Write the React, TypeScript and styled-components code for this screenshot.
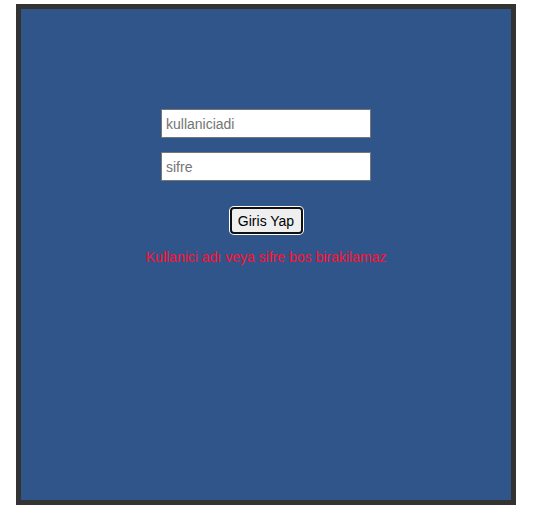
import React from "react";
import styled, { createGlobalStyle } from "styled-components";

const Global = createGlobalStyle`
  html, body { margin: 0; padding: 0; background: #ffffff; }
  body { font-family: "Liberation Sans", Arial, sans-serif; }
`;

const Frame = styled.div`
  box-sizing: border-box;
  margin: 4px 0 0 16px;
  width: 500px;
  height: 501px;
  border: 5px solid #333333;
  background: #30558a;
  padding: 100px 0 0 0;
  display: flex;
  flex-direction: column;
  align-items: center;
`;

const Field = styled.input<{ $gap: number }>`
  box-sizing: border-box;
  width: 210px;
  height: 29px;
  margin-bottom: ${(p) => p.$gap}px;
  border: 1px solid #767676;
  padding: 1px 4px;
  font-family: "Liberation Sans", Arial, sans-serif;
  font-size: 14px;
  color: #000;
  background: #ffffff;
  outline: none;
  &::placeholder { color: #757575; }
`;

const Button = styled.button`
  box-sizing: border-box;
  width: 73px;
  height: 27px;
  border: 2px solid #101010;
  border-radius: 4px;
  box-shadow: 0 0 0 1px #ffffff;
  background: #efefef;
  color: #000;
  font-family: "Liberation Sans", Arial, sans-serif;
  font-size: 14px;
  padding: 0 4px;
  cursor: pointer;
`;

const ErrorText = styled.p`
  margin: 15px 0 0 0;
  color: #ff1133;
  font-family: "Liberation Sans", Arial, sans-serif;
  font-size: 14px;
  line-height: 16px;
`;

export default function App() {
  return (
    <>
      <Global />
      <Frame>
        <Field $gap={14} placeholder="kullaniciadi" />
        <Field $gap={26} type="password" placeholder="sifre" />
        <Button>Giris Yap</Button>
        <ErrorText>Kullanici adı veya sifre bos birakilamaz</ErrorText>
      </Frame>
    </>
  );
}
